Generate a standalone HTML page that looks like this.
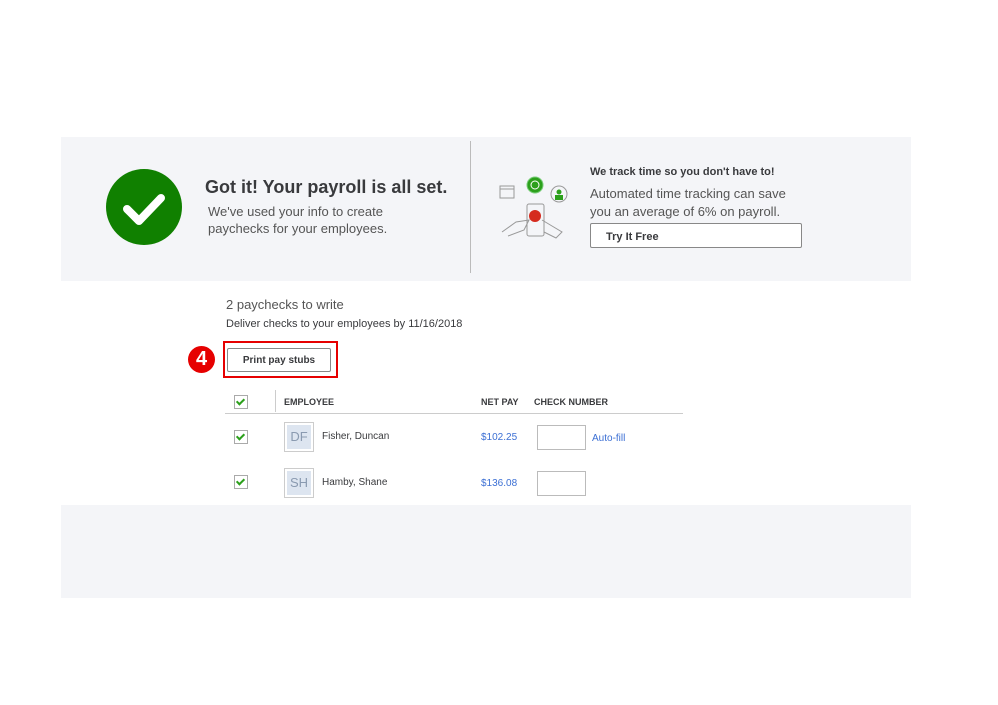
<!DOCTYPE html>
<html><head><meta charset="utf-8"><style>
body{margin:0;width:998px;height:705px;background:#fff;position:relative;font-family:"Liberation Sans",sans-serif;color:#393a3d;overflow:hidden}
.a{position:absolute;white-space:nowrap}
.cb{position:absolute;width:12px;height:12px;border:1px solid #aaa;background:#fff}
.cb:after{content:"";position:absolute;left:3px;top:1px;width:3px;height:6px;border:solid #2ca01c;border-width:0 2px 2px 0;transform:rotate(45deg)}
.av{position:absolute;width:28px;height:28px;border:1px solid #ccc;background:#fff;padding:0}
.av span{position:absolute;left:2px;top:2px;width:24px;height:24px;background:#dde5f0;color:#8a9ab0;font-size:13px;text-align:center;line-height:24px}
.inp{position:absolute;width:47px;height:23px;border:1px solid #bbb;background:#fff}
</style></head><body>
<div class="a" style="left:61px;top:137px;width:850px;height:144px;background:#f4f5f8"></div>
<div class="a" style="left:470px;top:141px;width:1px;height:132px;background:#bbb"></div>
<div class="a" style="left:61px;top:505px;width:850px;height:93px;background:#f4f5f8"></div>
<svg class="a" style="left:105px;top:168px" width="78" height="78"><circle cx="39" cy="39" r="38" fill="#108000"/><path d="M22 41 L34 53 L56 30" stroke="#fff" stroke-width="8" fill="none" stroke-linecap="round" stroke-linejoin="round"/></svg>
<div class="a" style="left:205px;top:177px;font-size:18px;font-weight:bold;color:#393a3d">Got it! Your payroll is all set.</div>
<div class="a" style="left:208px;top:203px;font-size:13px;line-height:17px;color:#555">We've used your info to create<br>paychecks for your employees.</div>
<svg class="a" style="left:496px;top:174px" width="72" height="68" fill="none" stroke="#999" stroke-width="1">
<rect x="4" y="12" width="14" height="12"/><line x1="4" y1="15" x2="18" y2="15"/>
<circle cx="39" cy="11" r="8" fill="#2ca01c" stroke="#7c7"/><circle cx="39" cy="11" r="4" stroke="#fff"/>
<circle cx="63" cy="20" r="8"/><circle cx="63" cy="18" r="2.5" fill="#2ca01c" stroke="none"/><rect x="59" y="21" width="8" height="5" fill="#2ca01c" stroke="none"/>
<rect x="31" y="30" width="17" height="32" rx="2"/><circle cx="39" cy="42" r="6" fill="#d52b1e" stroke="none"/>
<path d="M6 58 L20 48 L33 46 L28 56 L12 62"/><path d="M46 46 L56 52 L66 58 L60 64 L48 58"/>
</svg>
<div class="a" style="left:590px;top:166px;font-size:11px;font-weight:bold;color:#393a3d">We track time so you don't have to!</div>
<div class="a" style="left:590px;top:185px;font-size:13px;line-height:18px;color:#555">Automated time tracking can save<br>you an average of 6% on payroll.</div>
<div class="a" style="left:590px;top:223px;width:212px;height:25px;border:1px solid #888;border-radius:2px;background:#fff;box-sizing:border-box"><span class="a" style="left:15px;top:7px;font-size:11px;font-weight:bold;color:#393a3d">Try It Free</span></div>
<div class="a" style="left:226px;top:297px;font-size:13px;color:#555">2 paychecks to write</div>
<div class="a" style="left:226px;top:318px;font-size:11px;color:#393a3d">Deliver checks to your employees by 11/16/2018</div>
<div class="a" style="left:188px;top:346px;width:27px;height:27px;border-radius:50%;background:#e60000;color:#fff;font-weight:bold;font-size:20px;text-align:center;line-height:27px">4</div>
<div class="a" style="left:223px;top:341px;width:115px;height:37px;border:2px solid #e60000;box-sizing:border-box"></div>
<div class="a" style="left:227px;top:348px;width:104px;height:24px;border:1px solid #888;border-radius:2px;background:#fff;box-sizing:border-box;text-align:center;font-size:10px;font-weight:bold;line-height:24px">Print pay stubs</div>
<div class="cb" style="left:234px;top:395px"></div>
<div class="a" style="left:275px;top:390px;width:1px;height:22px;background:#ccc"></div>
<div class="a" style="left:284px;top:397px;font-size:9px;font-weight:bold">EMPLOYEE</div>
<div class="a" style="left:481px;top:397px;font-size:9px;font-weight:bold">NET PAY</div>
<div class="a" style="left:534px;top:397px;font-size:9px;font-weight:bold">CHECK NUMBER</div>
<div class="a" style="left:225px;top:413px;width:458px;height:1px;background:#ccc"></div>
<div class="cb" style="left:234px;top:430px"></div>
<div class="av" style="left:284px;top:422px"><span>DF</span></div>
<div class="a" style="left:322px;top:431px;font-size:10px">Fisher, Duncan</div>
<div class="a" style="left:481px;top:432px;font-size:10px;color:#3b6fd4">$102.25</div>
<div class="inp" style="left:537px;top:425px"></div>
<div class="a" style="left:592px;top:433px;font-size:10px;color:#3b6fd4">Auto-fill</div>
<div class="cb" style="left:234px;top:475px"></div>
<div class="av" style="left:284px;top:468px"><span>SH</span></div>
<div class="a" style="left:322px;top:477px;font-size:10px">Hamby, Shane</div>
<div class="a" style="left:481px;top:478px;font-size:10px;color:#3b6fd4">$136.08</div>
<div class="inp" style="left:537px;top:471px"></div>
</body></html>
